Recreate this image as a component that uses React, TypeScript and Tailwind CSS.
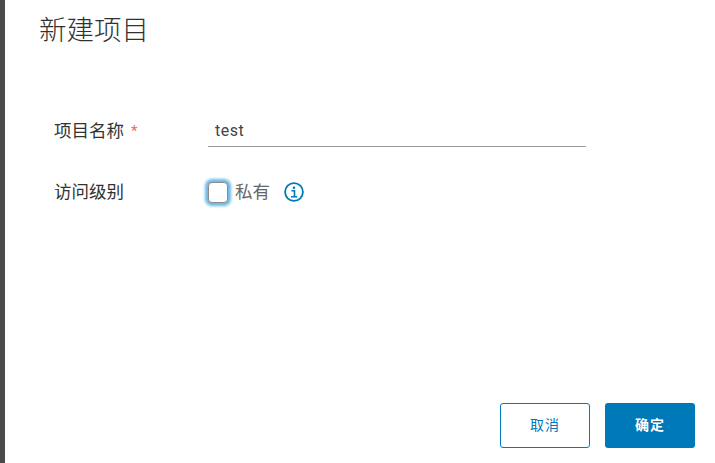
import React from 'react';

const cjk = "font-['Roboto','Noto_Sans_CJK_SC',sans-serif]";

const InfoIcon = () => (
  <svg viewBox="0 0 20 20" className="h-5 w-5" fill="none">
    <circle cx="10" cy="10" r="8.9" stroke="#0079b8" strokeWidth="1.8" />
    <circle cx="10" cy="5.8" r="1.3" fill="#0079b8" />
    <path d="M7.4 8.8H10.5V14.4M7 14.8H13.2" stroke="#0079b8" strokeWidth="1.6" />
  </svg>
);

const App: React.FC = () => {
  return (
    <div className={`flex h-[463px] w-[715px] overflow-hidden bg-white ${cjk}`}>
      <div className="w-[5px] shrink-0 bg-[#4a4a4a]" />
      <div className="flex min-w-0 flex-1 flex-col pl-[34px] pr-5">
        <h3 className="mt-[13px] text-[27.5px] leading-9 font-light text-[#313131]">新建项目</h3>

        {/* 表单 */}
        <div className="mt-[58px] flex h-[40px] items-center pl-[15px]">
          <label className="flex w-[154px] items-center pt-[9px] text-[17.5px] text-[#333333]">
            项目名称
            <span className="ml-[7px] text-[15px] leading-none text-[#e0705f]">*</span>
          </label>
          <div className="flex h-[40px] w-[378px] items-center border-b border-[#9a9a9a] pt-[9px] pl-[7px] text-[16px] tracking-[0.5px] text-[#444444]">
            test
          </div>
        </div>

        <div className="mt-[30px] flex h-[30px] items-center pl-[15px]">
          <label className="w-[154px] text-[17.5px] text-[#333333]">访问级别</label>
          <span className="h-[21px] w-[20px] rounded-[4px] border border-[#8c8c8c] bg-white shadow-[0_0_3px_3px_#6bb8e6]" />
          <span className="ml-[7px] text-[17.5px] text-[#666666]">私有</span>
          <span className="ml-[14px] flex"><InfoIcon /></span>
        </div>

        <div className="mt-auto mb-[15px] flex justify-end gap-[15px]">
          <button className="h-[45px] w-[90px] rounded-[3px] border border-[#0079b8] bg-white text-[14px] tracking-[1px] text-[#0079b8]">
            取消
          </button>
          <button className="h-[45px] w-[90px] rounded-[3px] bg-[#0079b8] text-[14px] font-bold tracking-[1px] text-white">
            确定
          </button>
        </div>
      </div>
    </div>
  );
};

export default App;
